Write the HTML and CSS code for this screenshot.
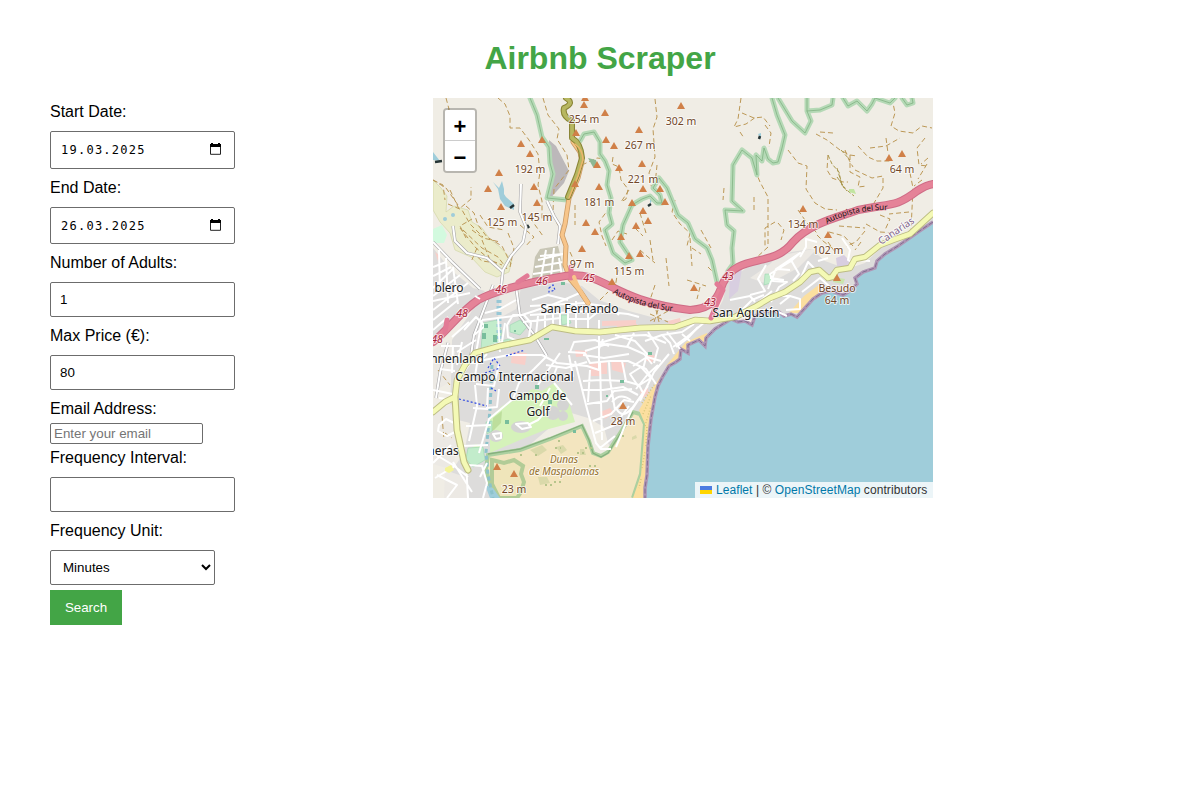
FILE: index.html
```html
<!DOCTYPE html>
<html lang="en">
<head>
<meta charset="utf-8">
<title>Airbnb Scraper</title>
<link rel="stylesheet" href="styles.css">
</head>
<body>
<h1 class="title">Airbnb Scraper</h1>
<main class="content">
<form class="search-form">
  <label class="label" for="start">Start Date:</label>
  <div class="field date"><input class="date-input" id="start" value="19.03.2025"><svg class="calendar" viewBox="0 0 11 12"><path d="M.5 2.500h10v8.800H.5z" fill="none" stroke="#222"/><path d="M0 1h1V0h2v1h5V0h2v1h1v3H0z" fill="#000"/></svg></div>
  <label class="label" for="end">End Date:</label>
  <div class="field date date-end"><input class="date-input" id="end" value="26.03.2025"><svg class="calendar" viewBox="0 0 11 12"><path d="M.5 2.500h10v8.800H.5z" fill="none" stroke="#222"/><path d="M0 1h1V0h2v1h5V0h2v1h1v3H0z" fill="#000"/></svg></div>
  <label class="label" for="adults">Number of Adults:</label>
  <input class="field" id="adults" value="1">
  <label class="label" for="price">Max Price (€):</label>
  <input class="field" id="price" value="80">
  <label class="label" for="email">Email Address:</label>
  <input class="email" id="email" placeholder="Enter your email">
  <label class="label" for="interval">Frequency Interval:</label>
  <input class="field" id="interval">
  <label class="label" for="unit">Frequency Unit:</label>
  <select class="field unit" id="unit"><option>Minutes</option></select>
  <button class="search" type="button">Search</button>
</form>
<section class="map">
<svg class="tiles" viewBox="433 98 500 400">
<defs>
  <path id="pk" d="M0-4L4 3H-4Z" fill="#d08048"/>
</defs>
<rect x="433" y="98" width="500" height="400" fill="#f0ede5"/>

<!-- farmland and parks -->
<g fill="#ebeccb" stroke="#cfd3a0" stroke-width=".6">
  <path d="M433 180L441 188L447 196L446 212L454 206L468 210L472 222L482 228L489 238L500 247L512 260L509 272L497 277L485 272L471 257L455 250L450 233L440 222L433 210Z"/>
</g>
<path d="M433 229l9-4 5 10-3 8-11 0z" fill="#d3fadf"/>
<!-- urban ground -->
<g fill="#dddcdb">
  <path d="M433 248l18 22 22 18 12 3-22 19-10 16-20 12z"/>
  <path d="M452 340l24-35 22-12 34-6 30-5 20 4 17 14 30 11 30 8 28 5 28-1 22 3-5 10-20 14-16 20-22 20-24 22-10 25-14 18-10 0-8-12-4-16-16-9-20-6-35 30-22 20-1 20-5 46h-55v-55l14-20 6-30-20-5z"/>
  <path d="M723 300l4-18 22-16 24-6 18-8 20-3 14 12 22 8 18-6 16-15 14-8 18-7 20-19v20l-24 18-24 16-18 20-19 11-14-6-16 4-18 22-24-2-24-2-26 6-12-4z"/>
</g>
<g fill="#ece9e4"><path d="M433 350l16-10 6 12-5 30-17 10zM433 410l20-6 6 20-6 46-20-6zM445 470l20 7 4 21h-25zM655 309l40 0-5 8-30 3zM500 290l22-6-6 25-18 10zM750 278l20-14 8-8 40-8-20 20-30 16z"/></g>
<path d="M540 249l18-3 5 20-1 10-30 3 3-22z" fill="#c8c6b5"/>
<path d="M549 140l7 6 13 25-5 12-16 18 2-22z" fill="#bcb8ba"/>
<g fill="#f8cfc9"><path d="M589 362l18 0v12h-16zM611 360l15 3-3 10-11-3zM600 412l10-4 4 5-9 6zM640 392l7-5 2 6-6 5zM575 350l12 1v5l-11 1zM435 252l5 4-2 5zM602 321l34-1v5l-34 1zM668 321l12-3 1 4-12 3zM648 353l7 3-3 7-7-3zM592 368l8 0v8l-9 0zM617 324l20 0v5h-20zM923 243l5-4v5zM512 352l15 1-2 12-14-2z"/></g>
<g fill="#d5f2ba"><path d="M490 453v-34l12-13 18-8 12-9 10 2 12-8 12 10 9 29-30 8-25 10zM464 456l12-12 8 5-2 13-12 3z"/></g>
<path d="M492 432l1-14 9-7-1 12z" fill="#bdde9c"/>
<g fill="#d4d4d3"><ellipse cx="521" cy="427" rx="10" ry="6"/><ellipse cx="496" cy="436" rx="7" ry="6"/><circle cx="553" cy="413" r="7"/><circle cx="563" cy="405" r="6"/><circle cx="563" cy="416" r="5"/></g>
<g fill="#c2eccb" stroke="#91d0ab" stroke-width=".5"><path d="M483 323l14-3 5 12-4 14-17 4zM510 325l10-5 7 7-7 8-10-3zM500 341l14-3-3 9-11 2zM561 315l7 0 3 8-9 2zM765 274l6 0v9l-7 2zM486 422l6-1v10l-5 3zM468 448l15-1 2 13-12 7-7-8z"/></g>
<g fill="#d8cee0"><path d="M730 272l12-3-4 22-9 8zM836 258l8-3 7 7-6 6-8-2z"/></g>
<path d="M834 277l11 2-2 5-10-2z" fill="#c9e5ad"/>

<!-- dunes -->
<path d="M488 455L520 450L550 439L582 426L589 441L593 453L601 456L608 452L622 430L633 412L640 414L645 424L643 449L641 474L633 498H500L490 484L486 469Z" fill="#f3e5bf"/>
<path d="M499 498L490 485L486 469L488 455L520 450L550 439L582 426L589 441L593 453L601 456L608 452L622 430L633 412L640 414L645 424L643 449L641 474L633 498" fill="none" stroke="#acd0a0" stroke-width="4"/>
<path d="M488 454L520 449L550 438L582 425L589 440L593 453L601 457L608 453L622 431L633 412" fill="none" stroke="#85b07d" stroke-width="1.3"/>
<path d="M492 460l12 3 10-3 9 6-2 8 3 8-3 10-4 6H499l-7-14z" fill="#efe5ba" stroke="#b2cc97" stroke-width="4"/>
<path d="M530 450l12-5 5 5-9 6zM556 447l7-2 4 5-6 4zM538 477l9 0 3 6-10 2zM580 449l4 0 2 6-6 0zM632 437l4-2 1 3-5 2z" fill="#dad9aa"/>
<path d="M535 455h5m15-7h6m-16 37h7m25-32h8m-65 2h4m30 27h8m-4-41h5m22 7h7m30-12h5m-38 30h7m-13 8h4" stroke="#b6c48b" stroke-width="2" stroke-dasharray="2 3"/>

<!-- beach and sea -->
<path d="M677 360L661 376L648 395L639 410L645 424L643 450L641 475L633 498H650L656 420ZM707 333L686 342L666 366L672 369L710 339ZM820 284L804 296L789 313H799L822 292Z" fill="#fbdf9f"/>
<path d="M642 403l12-18m-11 29l8-18m-6 30l6-20m-5 40l1-20m-5 42l3-16m-4 27l-2 9" stroke="#d6c67a" stroke-width="1.5" stroke-dasharray="1 2"/>
<path d="M933 222L918 232L898 246L885 254L877 261L875 268L863 272L855 278L857 284L848 292L843 295L832 291L822 293L813 299L805 308L797 317L791 314L784 316L779 312L765 311L755 316L752 325L745 321L738 322L731 319L715 329L706 338L705 346L699 340L688 345L688 353L681 349L680 359L676 362L669 366L663 376L658 386L655 397L651 419L648 446L647 475L645 488L645 498H933Z" fill="#9fcdda"/>
<path d="M933 222L918 232L898 246L885 254L877 261L875 268L863 272L855 278L857 284L848 292L843 295L832 291L822 293L813 299L805 308L797 317L791 314L784 316L779 312L765 311L755 316L752 325L745 321L738 322L731 319L715 329L706 338L705 346L699 340L688 345L688 353L681 349L680 359L676 362L669 366L663 376L658 386L655 397L651 419L648 446L647 475L645 488L645 498" fill="none" stroke="#af96b5" stroke-width="3.5"/>
<path d="M933 222L918 232L898 246L885 254L877 261L875 268L863 272L855 278L857 284L848 292L843 295L832 291L822 293L813 299L805 308L797 317L791 314L784 316L779 312L765 311L755 316L752 325L745 321L738 322L731 319L715 329L706 338L705 346L699 340L688 345L688 353L681 349L680 359L676 362L669 366L663 376L658 386L655 397L651 419L648 446L647 475L645 488L645 498" fill="none" stroke="#836e90" stroke-width="1" stroke-dasharray="5 2"/>

<!-- inland water -->
<g fill="#9fcdda"><path d="M493 182l6 6 3-7 2 8 0 5 2 3 8 7 0 6-9-4-5-7-2-10zM433 152l7 9-7-1zM758 134l3-1v6zM650 199l3 0-3 5zM485 485l8 3 7 10h-10z"/><circle cx="445" cy="219" r="2"/><circle cx="453" cy="215" r="2"/></g>
<path d="M435 162l7-1M510 208l4-3M759 139l1-3M648 206l3-2M527 225l2 3" stroke="#263436" stroke-width="2.500"/>
<path d="M499 300v50" fill="none" stroke="#97c7d6" stroke-width="5" stroke-dasharray="3 3"/>
<path d="M492 365L490 410L486 452L488 475L493 498" fill="none" stroke="#8cc2cb" stroke-width="3" stroke-dasharray="4 3"/>

<!-- tracks -->
<g fill="none" stroke="#bc9856" stroke-width="1" stroke-dasharray="5 3">
  <path d="M446 98l3 11-2 13M498 98l7 6 5 12 0 12 10 0 9 12 9 14 2 18-2 13 4 16 0 20"/>
  <path d="M543 98l5 17 11 14-2 10 10 16 2 15-15 19-1 22 5 15M458 205l-12-17-13-8M466 206l8 7 4 12 9 12 15 9 9 18"/>
  <path d="M433 180l10 5 2 15M450 190l9 19 12-10 0-12M480 215l8 12 16 3M460 228l16 20 18 15M448 204l14 6 8 14 13 13M477 248l-6 14M508 233l6 15-4 19M520 225l14 12-9 10M530 218l13 18"/>
  <path d="M463 230L482 248L498 257L507 269M472 230L483 238L500 242M497 263L482 261L473 253M482 240L490 260L502 265M466 238L460 226L472 219"/>
  <path d="M655 99l2 18-4 12 2 28-6 16 3 17M741 98l-3 21-4 8 12-3 10-7M742 113l12 5 9-1 7 9M740 132l4 6"/>
  <path d="M613 157l-1 7 7 3 2 13 7 9-2 10-5 3M675 200l-3 12 8 12 10 9-3 13M755 170l5 12 8 15 0 50-13 12M724 188l-1 12M754 197l0 16"/>
  <path d="M765 125l6 8-2 14M788 150l10 13 9 3-1 23 9 14 10 6 12 1M816 134l11 6 13 10 10 5 0 17 10 5-2 10 9-1M820 132l13 1M828 155l-1 15 5 8 11 4 5 0M850 155l7 1M845 150l4 10 4 7M855 170l17 8 11-2 0 12-9 15"/>
  <path d="M858 146l10 11 9 4 14 0M870 148l16-2 14-8M886 138l2 15M892 98l3 15-4 13 8 5 14 2 9-7 10 2M925 138l-8 10 2 17 8 1M928 158l-7 6M922 180l-8 6M910 173l3 15-2 42M927 164l-9 15"/>
  <path d="M775 222l-10 6 0 20M778 223l6 7-3 10M798 210l9 13 10 10M817 235l6 6 13 10M829 232l15 4 9 10M865 231l-9 11-10 4M880 215l10 4-5 11M909 212l-20 2M866 224l14 8 16 1M839 226l26 2M828 242l7 10M861 242l-6 8"/>
  <path d="M640 250l15 13M650 240l3 20M618 270l-3 18M690 238l2 28M666 258l3 28M655 285l-5 15M700 287l-3 12M687 280l19 6M708 267l10 10M692 248l9 6M701 230l10 18M600 300l8-8M610 207l-11 15 3 14 4 10M635 228l8 8M612 240l6-9 9 3M629 190l-8 12M640 213l6 20M657 165l-2 20"/>
  <path d="M650 314l18 8M668 311l-18 10M654 322l4-12M659 322l-3-12M610 287l10 3M570 252l6 13M575 205l0 20M582 165l15-7 9 1M442 416l2 24M445 433l7 5M438 370l12 15"/>
</g>
<g fill="none" stroke="#a9974c" stroke-width="1" stroke-dasharray="4 2"><path d="M828 155l4 9 7 8 3 14 12 10M837 168l5 17 5 6M837 177l8 11M841 150l9 10"/></g>
<path d="M849 189l5 0 2 5-7-2z" fill="#c1e5a0"/>

<!-- nature reserve borders -->
<g fill="none" stroke-linejoin="round" stroke-linecap="round">
  <g stroke="#b5d9b6" stroke-width="5">
    <path d="M530 98L537 115L542 137L549 147L550 163L553 174L547 198L567 200M580 141L584 134L594 132L600 142V154L605 161L609 171L607 185L611 198L609 213L612 224L605 230L613 253L625 263L632 260L620 242L623 225L632 205L642 199L650 196L657 203L662 203L660 195L653 188L659 178L667 188L678 215L688 223L695 239L707 248L712 260L717 282"/>
    <path d="M772 98L777 115L785 135L782 148L778 162L773 163L768 159L764 148L762 161L756 155L757 175L752 158L742 150L733 165L732 201L743 211L725 210L727 225L734 231L732 248L733 264L728 271M778 98L792 121L805 133L811 121L807 111V98M807 111L820 110L832 105L833 98M843 98L848 106L857 101L867 111L872 104L875 98L890 103L895 98M902 98L907 105L913 103L912 98"/>
  </g>
  <g stroke="#7aad7b" stroke-width=".7">
    <path d="M530 98L537 115L542 137L549 147L550 163L553 174L547 198L567 200M580 141L584 134L594 132L600 142V154L605 161L609 171L607 185L611 198L609 213L612 224L605 230L613 253L625 263L632 260L620 242L623 225L632 205L642 199L650 196L657 203L662 203L660 195L653 188L659 178L667 188L678 215L688 223L695 239L707 248L712 260L717 282"/>
    <path d="M772 98L777 115L785 135L782 148L778 162L773 163L768 159L764 148L762 161L756 155L757 175L752 158L742 150L733 165L732 201L743 211L725 210L727 225L734 231L732 248L733 264L728 271M778 98L792 121L805 133L811 121L807 111V98M807 111L820 110L832 105L833 98M843 98L848 106L857 101L867 111L872 104L875 98L890 103L895 98M902 98L907 105L913 103L912 98"/>
  </g>
</g>
<path d="M588 158l8 2 2 8-5-1z" fill="#8db894"/>

<!-- minor streets -->
<g fill="none" stroke="#aaa9aa" stroke-width="3.200" stroke-linejoin="round">
  <path d="M433 242L452 262L480 289M453 226L455 241L467 253L487 258L503 272M521 184L520 212L526 227L523 242L511 256L503 270L501 288M547 201L554 216L560 226L558 244M436 398l4-25 8-30M470 362l4-27 19-50M516 286l4 30 15 20 12 20"/>
</g>
<g fill="none" stroke="#fff" stroke-width="2" stroke-linejoin="round">
  <path d="M433 242L452 262L480 289M453 226L455 241L467 253L487 258L503 272M521 184L520 212L526 227L523 242L511 256L503 270L501 288M547 201L554 216L560 226L558 244M436 398l4-25 8-30M470 362l4-27 19-50M516 286l4 30 15 20 12 20"/>
  <path d="M482 320L522 315L552 305L582 292M482 320l-6 33M470 363L508 355L542 355L557 363L587 366L599 370V336M487 354l-10 10-3 18M516 300l-16 9-15 4M547 356L534 369L519 383L513 399L489 419L479 453"/>
  <path d="M476 384l18 2 5-22M462 375l8-12 13 0M457 352l19-12M464 330l12-13 9 9-11 9M498 317l2 35M480 350l22-8 3-19M507 325l6-10 11 0 7 8-2 14-9 5-12-5zM538 316l-2 18M545 313l0 17M553 310l0 15M560 308l0 18M568 305l0 24M576 301l0 27M588 310v19M599 320v11M530 306l55-3M530 315l58-4M523 322l38-4M567 319l22 0 10-8 29 3 11 3M590 304l20 3 9 8M532 300l16-5 20 5"/>
  <path d="M570 352l4-10 21-2 14 6M568 352l17 1 5 10 20-2 18 0 18 8 10 15M546 365l20 3 21-6M553 377l4-10M573 377l-4-22M575 361l11 44 10 38 5 6 10 0M583 381l18-1 24 1 14 4 4 8-12 18-15 36M583 390l20 0 20-3 15 8M587 404l20-3 7-10 18-2M593 421l18-7 13-14 10 2M595 433l20-8 14-19M600 448l15-12M590 370l-2 32M600 362l2 78M609 362l1 18M622 361l4 20M610 380l5 30M585 351l22-7 21 3 16 7 8 10M583 355l21 3 25-4M603 339l-4 10M615 335l20 6 12 13-4 15M634 333l-7 14M648 332l10 16-4 15M600 343l23-7 23-1 20 8M645 341l17-6 8 8 4 11M662 335l20-3 12-8M667 332l13 17M682 334l8 7"/>
  <path d="M612 402q8-10 19-2M616 408q6 12 16 0M640 401L654 372L669 354M630 411L648 386M636 389l12-15 10-9M651 378l-10-11-11 7 8 12zM633 366l14-9 14 4M676 347L688 338L698 327"/>
  <path d="M475 385l2 21-8 35M488 388l-1 20 10-1 2-18M466 426l25-1M473 408l15 1M462 446l26-1M468 477L453 465L433 453M433 463l18-18M453 462l19 30M435 478l20-12M480 477l7-14M468 465l14 1 5 17-4 15M466 462l2 36M447 498l10-13-20-10M438 431l9 5 8-4-1-9-8-4-7 6zM433 390l20 4M455 400l-16-2"/>
  <path d="M516 424l12-1 3 4-9 2zM493 434l3 5 5-1 0-5zM528 425l10-5 13-15M560 353l-22 32M554 383l18 22M550 388l-10 18"/>
  <path d="M771 302l8-15 8-5-14-1-3-7 21-13 9-8-21 14M768 289l8-20 20-13M791 260l8 14-6 7M800 280l8-18 18 18M778 269l12 1M780 304l10-8 10 3 0 10-14 1M759 302l13-11M777 296l14 0M754 310l20 0 13 6M802 292l18-14 9 8M750 295l15-4-7-12 8-14M800 257l6-10 0-8 11 3M818 261l10-3M842 238l8 12-2 10 8 5M858 260l12 1M770 278l14 2M740 312l12-12 12-5M730 300l20-4 5 6M706 321l-19 16-14 10"/>
  <path d="M538 260l25-6M535 267l28-5M533 274l28-4M546 250l-5 28M554 248l-3 29M559 258l3 18M540 256l23-2"/>
  <path d="M433 288l20-19M433 296l27-21M433 310l35-27M433 320l25-20M433 267l13-5M433 276l18-9M439 250l1 42M446 258l2 45M453 267l5 37M433 301l37-8M433 330l15-13M452 337l17-15M441 346l20 0M442 358l16 0M440 369l15 2M453 345l-1 28M462 342l-5 23"/>
</g>
<g fill="#78bd9c"><path d="M482 333h4v6h-4zM493 335h4v7h-4zM484 324h4v4h-4zM535 385h4v4h-4zM548 400h4v4h-4zM620 380h4v3h-4zM648 352h4v3h-4zM573 430h3v3h-3zM514 330h2v2h-2zM544 338h5v2h-5zM505 420h4v4h-4zM561 282h4v3h-4zM606 395h2v2h-2zM493 378h3v3h-3z"/></g>
<path d="M488 368l6-10 6 8M485 373l15-5M459 399L487 406M506 356l19-6M549 288l4-3 2 5-6 2zM441 408l-6 2M491 388l5 3" fill="none" stroke="#314be2" stroke-width="1.200" stroke-dasharray="2 2"/>
<path d="M445 468l6-3 3 5-5 3-4-2z" fill="#f4f498"/>

<!-- major roads -->
<g fill="none" stroke-linejoin="round" stroke-linecap="round">
  <path d="M433 412L445 402L455 397L457 380L465 365L475 353L500 346L530 340L552 327L575 331L600 332L640 328L675 327L695 320L710 321L735 317L755 307L770 298L785 292L800 282L810 272L819 270L828 278L832 277L837 270L850 268L855 259L865 257L880 245L893 240L910 234L933 213" stroke="#bcbc83" stroke-width="6.500"/>
  <path d="M455 397L457 430L464 462L468 470" stroke="#bcbc83" stroke-width="7"/>
  <path d="M433 412L445 402L455 397L457 380L465 365L475 353L500 346L530 340L552 327L575 331L600 332L640 328L675 327L695 320L710 321L735 317L755 307L770 298L785 292L800 282L810 272L819 270L828 278L832 277L837 270L850 268L855 259L865 257L880 245L893 240L910 234L933 213M455 397L457 430L464 462L468 470" stroke="#f4f9b5" stroke-width="4.800"/>
  <path d="M573 142L580 152L582 162L578 178L569 198L565 224L562 235L566 246L565 265L570 279L580 291L588 303" stroke="#ca9963" stroke-width="5"/>
  <path d="M573 142L580 152L582 162L578 178L569 198L565 224L562 235L566 246L565 265L570 279L580 291L588 303" stroke="#f7c58a" stroke-width="3.500"/>
  <path d="M566 98q9 5-2 10-2 8 8 13l0 17q9 5 10 20l-5 17-9 22" stroke="#8a8536" stroke-width="6"/>
  <path d="M566 98q9 5-2 10-2 8 8 13l0 17q9 5 10 20l-5 17-9 22" stroke="#b7b760" stroke-width="3.800"/>
  <path d="M575 144q8 6 8 16l-5 16-9 22" stroke="#edb56c" stroke-width="1.500"/>
  <path d="M433 342C448 330 460 312 478 300C500 288 536 281 565 276C605 270 608 300 690 310C714 309 719 295 723 283C738 252 773 269 793 242C811 222 843 216 858 210C890 203 895 208 917 191Q926 185 933 184" stroke="#cf6c86" stroke-width="8.200"/>
  <path d="M433 342C448 330 460 312 478 300C500 288 536 281 565 276C605 270 608 300 690 310C714 309 719 295 723 283C738 252 773 269 793 242C811 222 843 216 858 210C890 203 895 208 917 191Q926 185 933 184" stroke="#e58398" stroke-width="6.200"/>
  <path d="M717 284l6 6-7 16-5 12M447 320l-2 12M571 278l0-11M518 282l9-6" stroke="#e27b96" stroke-width="5"/>
  <path d="M574 277Q577 287 588 303" stroke="#f7c58a" stroke-width="4"/>
</g>
<path d="M475 296l5 3" stroke="#fff" stroke-width="2" fill="none"/>

<!-- summits -->
<g>
<use href="#pk" x="585" y="98"/><use href="#pk" x="584" y="105"/><use href="#pk" x="605" y="113"/><use href="#pk" x="681" y="106"/><use href="#pk" x="576" y="133"/><use href="#pk" x="639" y="130"/><use href="#pk" x="606" y="140"/><use href="#pk" x="614" y="146"/><use href="#pk" x="521" y="144"/><use href="#pk" x="542" y="140"/><use href="#pk" x="530" y="154"/><use href="#pk" x="597" y="165"/><use href="#pk" x="619" y="168"/><use href="#pk" x="642" y="164"/><use href="#pk" x="499" y="173"/><use href="#pk" x="488" y="189"/><use href="#pk" x="534" y="187"/><use href="#pk" x="575" y="184"/><use href="#pk" x="599" y="187"/><use href="#pk" x="643" y="189"/><use href="#pk" x="660" y="189"/><use href="#pk" x="501" y="207"/><use href="#pk" x="537" y="203"/><use href="#pk" x="632" y="203"/><use href="#pk" x="665" y="202"/><use href="#pk" x="643" y="211"/><use href="#pk" x="586" y="223"/><use href="#pk" x="595" y="232"/><use href="#pk" x="636" y="226"/><use href="#pk" x="648" y="221"/><use href="#pk" x="621" y="237"/><use href="#pk" x="582" y="249"/><use href="#pk" x="629" y="256"/><use href="#pk" x="640" y="254"/><use href="#pk" x="612" y="282"/><use href="#pk" x="694" y="288"/><use href="#pk" x="889" y="158"/><use href="#pk" x="902" y="154"/><use href="#pk" x="803" y="209"/><use href="#pk" x="828" y="235"/><use href="#pk" x="837" y="278"/><use href="#pk" x="623" y="406"/><use href="#pk" x="497" y="467"/><use href="#pk" x="514" y="474"/>
</g>

<!-- names -->
<g class="map-text peak">
<text x="584" y="123">254 m</text><text x="681" y="125">302 m</text><text x="640" y="149">267 m</text><text x="530" y="173">192 m</text><text x="643" y="183">221 m</text><text x="599" y="206">181 m</text><text x="502" y="226">125 m</text><text x="537" y="221">145 m</text><text x="582" y="268">97 m</text><text x="629" y="275">115 m</text><text x="902" y="173">64 m</text><text x="803" y="228">134 m</text><text x="828" y="254">102 m</text><text x="837" y="292">Besudo</text><text x="837" y="304">64 m</text><text x="623" y="425">28 m</text><text x="514" y="493">23 m</text>
</g>
<g class="map-text place">
<text x="449" y="292">blero</text><text x="579.500" y="313">San Fernando</text><text x="746" y="317">San Agustín</text><text x="457" y="363">nnenland</text><text x="514.500" y="381">Campo Internacional</text><text x="537.500" y="400">Campo de</text><text x="538" y="416">Golf</text><text x="443" y="455">neras</text>
</g>
<g class="map-text dunes"><text x="564" y="463">Dunas</text><text x="564" y="475">de Maspalomas</text></g>
<g class="map-text junction"><text x="501" y="293">46</text><text x="542" y="285">46</text><text x="589" y="282">45</text><text x="462" y="317">48</text><text x="437" y="343">48</text><text x="728" y="280">43</text><text x="710" y="306">43</text></g>
<path id="road-west" d="M613 293Q636 307 679 312" fill="none"/><path id="road-east" d="M827 224Q853 209 892 210" fill="none"/><path id="province" d="M881 245L923 217" fill="none"/>
<g class="map-text road"><text><textPath href="#road-west" textLength="63">Autopista del Sur</textPath></text><text><textPath href="#road-east" textLength="63">Autopista del Sur</textPath></text></g>
<text class="map-text province"><textPath href="#province">Canarias</textPath></text>
</svg>
<div class="zoom"><button class="zoom-button" type="button">+</button><button class="zoom-button minus" type="button">−</button></div>
<div class="attribution"><svg class="flag" viewBox="0 0 12 8"><path fill="#4c7be1" d="M0 0h12v4H0z"/><path fill="#ffd500" d="M0 4h12v4H0z"/></svg><span><span class="link">Leaflet</span> | © <span class="link">OpenStreetMap</span> contributors</span></div>
</section>
</main>
</body>
</html>
```
FILE: styles.css
```css
* { box-sizing: border-box; }
body { margin: 0; background: #fff; color: #000; font: 16px "Liberation Sans", Arial, sans-serif; }
.title { margin: 0; padding-top: 40px; height: 98px; color: #43a546; font-size: 32px; line-height: 37px; text-align: center; }
.content { display: grid; grid-template-columns: 383px 500px; padding-left: 50px; align-items: start; }
.search-form { display: flex; flex-direction: column; align-items: flex-start; padding-top: 5px; }
.label { height: 18px; line-height: 18px; }
.field { width: 185px; height: 35px; margin: 10px 0; padding: 8px 9px; border: 1px solid #6c6c6c; border-radius: 2px; background: #fff; color: #000; font: 13.333px "Liberation Sans", Arial, sans-serif; }
.date { display: flex; align-items: center; justify-content: space-between; height: 38px; padding: 8px 13px 8px 10px; }
.date-end { height: 37px; }
.date-input { width: 120px; padding: 0; border: 0; outline: 0; font: 12px "DejaVu Sans Mono", monospace; letter-spacing: 1.25px; }
.calendar { width: 11px; height: 12px; margin-bottom: 2px; }
.email { width: 153px; height: 21px; margin: 5px 0; padding: 1px 3px; border: 1px solid #6c6c6c; border-radius: 2px; font: 13.333px "Liberation Sans", Arial, sans-serif; }
.email::placeholder { color: #757575; }
.unit { width: 165px; margin-bottom: 5px; padding: 8px; }
.search { width: 72px; height: 35px; padding: 0; border: 0; background: #43a546; color: #fff; font: 13.333px "Liberation Sans", Arial, sans-serif; }
.map { position: relative; width: 500px; height: 400px; overflow: hidden; }
.tiles { display: block; width: 500px; height: 400px; }
.map-text { font-family: "Noto Sans", "Open Sans", sans-serif; text-anchor: middle; paint-order: stroke; stroke: rgba(255,255,255,.7); stroke-width: 2px; stroke-linejoin: round; }
.peak { font-size: 10.5px; fill: #724729; }
.place { font-size: 12px; fill: #202020; }
.dunes { font-size: 10px; font-style: italic; fill: #94702d; }
.junction { font-size: 10.5px; font-style: italic; fill: #aa2036; }
.road { font-size: 8px; fill: #151515; text-anchor: start; stroke: #e58398; stroke-width: 1px; }
.province { font-size: 10px; fill: #80648d; text-anchor: start; }
.zoom { position: absolute; top: 10px; left: 10px; width: 34px; border: 2px solid rgba(0,0,0,.23); border-radius: 4px; background-clip: padding-box; }
.zoom-button { display: block; width: 30px; height: 31px; padding: 3px 0 0; border: 0; border-bottom: 1px solid #ccc; border-radius: 2px 2px 0 0; background: #fff; color: #000; font: bold 22px/26px "Liberation Sans", Arial, sans-serif; }
.minus { height: 30px; border-bottom: 0; border-radius: 0 0 2px 2px; }
.attribution { position: absolute; right: 0; bottom: 0; display: flex; align-items: center; width: 238px; height: 16px; padding: 0 5px; background: rgba(255,255,255,.8); color: #333; font: 12px/16px "Liberation Sans", Arial, sans-serif; letter-spacing: .07px; white-space: nowrap; }
.flag { width: 12px; height: 8px; margin-right: 4px; }
.link { color: #0078a8; }
```
